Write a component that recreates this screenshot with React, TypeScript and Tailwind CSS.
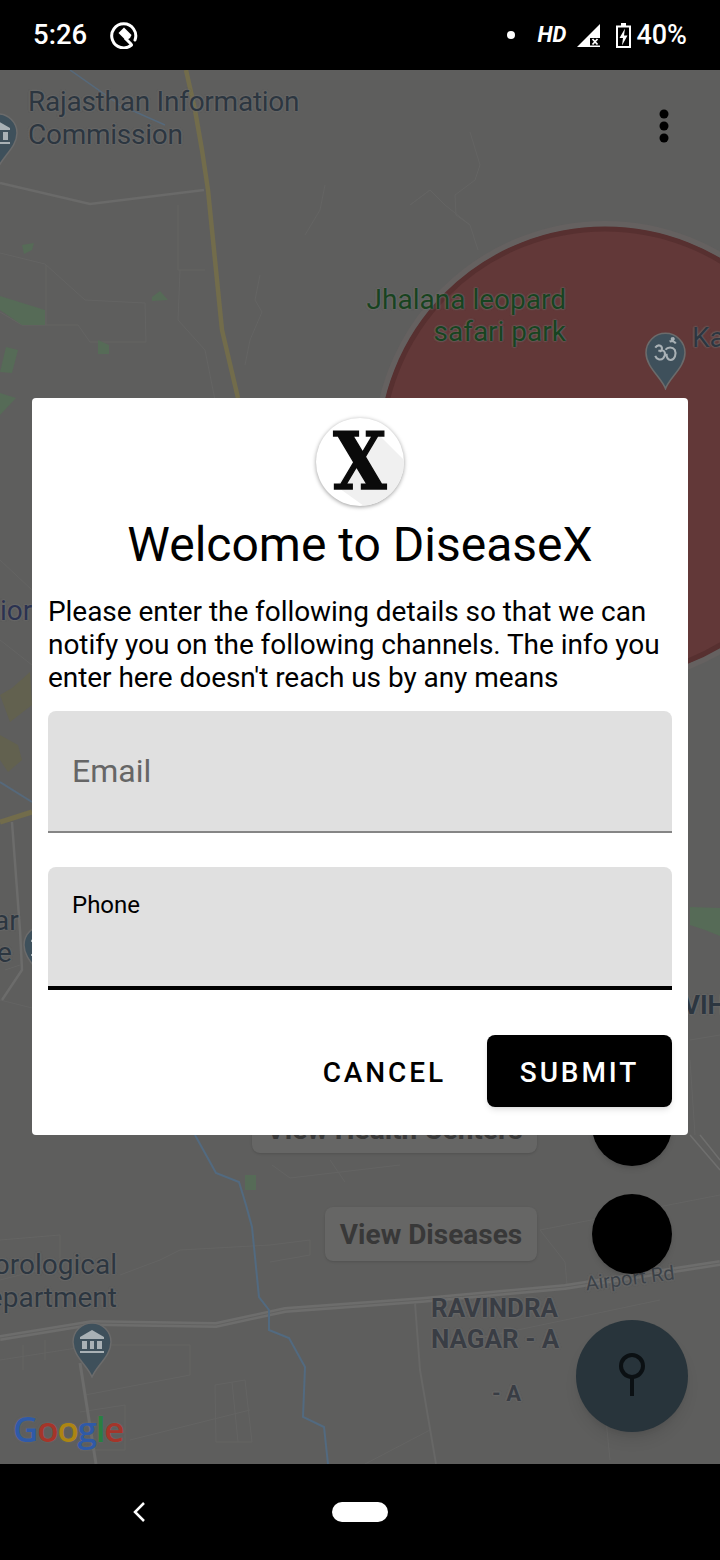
import React from "react";

const font = "font-['Roboto',sans-serif]";

// Map linework, in screen coordinates (the svg viewBox starts at y=70)
const thinRoads = [
  "M0 253 L45 264 L85 300 L145 303 L146 342 L90 342 L78 325 L22 325 L0 312",
  "M46 265 L46 325",
  "M470 132 L480 165 L475 180 L455 195 L456 215 L470 225",
  "M430 190 L410 205 L430 190 L445 205 L470 225 L478 250",
  "M325 185 L320 210 L305 235",
  "M260 275 L255 300 L262 312 L250 340 L245 365",
  "M178 205 L178 270 L205 270",
  "M180 270 L178 320 L205 350 L215 400",
  "M0 560 L32 590",
  "M0 640 L32 665",
  "M0 1000 L32 1008",
  "M5 970 L20 965",
  "M690 1060 L695 1135",
  "M690 1040 L720 1035",
  "M272 1165 L290 1178 L400 1165",
  "M330 1160 L345 1182",
  "M0 1240 L60 1235 L60 1265 L0 1280",
  "M120 1275 L160 1260 L180 1250 L270 1245 L310 1240 L310 1255 L270 1262",
  "M540 1230 L565 1262 L567 1285",
  "M540 1230 L720 1195",
  "M0 1360 L96 1345 L190 1345 L190 1375 L85 1395",
  "M23 1345 L23 1370 M45 1340 L45 1360",
  "M215 1385 L245 1380 L252 1442 L216 1442 Z",
  "M232 1382 L238 1442",
  "M80 1412 L125 1405 L125 1450 L80 1450",
  "M130 1440 L210 1420 L250 1410",
  "M365 1464 L430 1430",
  "M600 1360 L610 1460",
  "M470 1340 L660 1300",
];

const greens = [
  "M22 245 L34 243 L32 250 L24 254 Z",
  "M152 297 L160 291 L168 300 L152 301 Z",
  "M0 296 L45 310 L45 325 L22 325 L0 310 Z",
  "M98 340 L109 345 L109 354 L98 354 Z",
  "M6 347 L18 350 L12 373 L0 372 Z",
  "M0 393 L16 398 L0 415 Z",
  "M245 1175 L256 1175 L256 1190 L245 1190 Z",
  "M690 907 L720 908 L720 936 L705 930 L690 925 Z",
];

const yellowPatches = [
  "M0 695 L12 688 L30 672 L32 705 L10 722 Z",
  "M0 735 L18 745 L22 760 L8 772 L0 760 Z",
];

function Pin({ className, om }: { className: string; om?: boolean }) {
  return (
    <svg viewBox="0 0 40 56" className={className}>
      <path
        d="M20 55C16 44 1 34 1 20A19 19 0 1 1 39 20C39 34 24 44 20 55Z"
        fill="#3e505b"
        stroke="#6b6b6b"
        strokeWidth="1.5"
      />
      {om ? (
        <path
          d="M10 15C13 11 18 13 16 18C19 17 21 21 18 25C15 28 11 26 10 23M16 18H13M20 17C22 14 27 14 29 17C31 21 29 27 25 27C22 27 21 24 21 21M24 9C26 8 29 9 30 11M27 5.5A1 1 0 1 0 27.1 5.5"
          fill="none"
          stroke="#a9b1b5"
          strokeWidth="2"
        />
      ) : (
        <path
          d="M20 8L32 15V17H8V15ZM10 19H15V27H10ZM18 19H22V27H18ZM25 19H30V27H25ZM8 29H32V31H8Z"
          fill="#a9b1b5"
        />
      )}
    </svg>
  );
}

function ActionRow({ chip, className }: { chip: string; className: string }) {
  return (
    <div className="flex items-center justify-end gap-[55px] pr-[16px]">
      <div className={`flex h-[54px] items-center justify-center rounded-lg bg-[#666665] shadow-sm ${font} text-[28px] font-bold text-[#383838] ${className}`}>
        {chip}
      </div>
      <div className="h-[80px] w-[80px] rounded-full bg-black shadow-md" />
    </div>
  );
}

function MapCanvas() {
  const label = `absolute ${font} text-[#2c3640] whitespace-nowrap [text-shadow:0_0_2px_#707070,0_0_2px_#707070]`;
  return (
    <div className="relative flex-1 overflow-hidden bg-[#5e5e5d]">
      <svg viewBox="0 70 720 1394" className="absolute inset-0 w-[720px] h-[1394px]" fill="none">
        {thinRoads.map((d) => (
          <path key={d} d={d} stroke="#646463" strokeWidth="1" />
        ))}
        {greens.map((d) => (
          <path key={d} d={d} fill="#566b57" />
        ))}
        {yellowPatches.map((d) => (
          <path key={d} d={d} fill="#62614f" />
        ))}
        {/* grey roads */}
        <path d="M0 183L90 204L204 190" stroke="#6a6a69" strokeWidth="2.5" />
        <path d="M12 822L20 930L22 970L2 1000" stroke="#6c6c6b" strokeWidth="2.5" />
        <path d="M0 1338L92 1323L216 1325L285 1310L422 1300L565 1287L720 1263" stroke="#6d6d6c" strokeWidth="6" />
        <path d="M0 1338L92 1323L216 1325L285 1310L422 1300L565 1287L720 1263" stroke="#626261" strokeWidth="1" />
        <path d="M80 1363L96 1464" stroke="#6c6c6b" strokeWidth="3" />
        <path d="M415 1303L420 1370L436 1464" stroke="#676766" strokeWidth="2" />
        <path d="M700 1135L720 1160M690 1135L720 1170" stroke="#6f6f6e" strokeWidth="1.5" />
        {/* yellow roads */}
        <path d="M186 70L195 110L202 150L208 190L222 330L238 398" stroke="#726c4b" strokeWidth="4.5" />
        <path d="M0 822L32 812" stroke="#726c4b" strokeWidth="5" />
        {/* water */}
        <path d="M70 70L120 105L165 125" stroke="#56697b" strokeWidth="1.5" />
        <path d="M0 782L32 802" stroke="#56697b" strokeWidth="2" />
        <path
          d="M195 1135L216 1173L239 1182L246 1205L252 1227L259 1297L269 1310L269 1330L289 1338L305 1367L303 1417L324 1427L328 1464"
          stroke="#526a80"
          strokeWidth="2"
        />
        {/* disease zone */}
        <circle cx="605" cy="453" r="229" fill="#623838" stroke="#656160" strokeWidth="6" />
        <circle cx="605" cy="453" r="224" stroke="#573030" strokeWidth="5" />
      </svg>

      <div className={`${label} left-[28px] top-[15px] text-[28px] leading-[33px] tracking-[-0.25px]`}>
        Rajasthan Information
        <br />
        Commission
      </div>
      <Pin className="absolute left-[-22px] top-[43px] w-[40px] h-[56px]" />
      <div className={`${label} left-[366px] top-[214px] w-[200px] text-right text-[28px] leading-[32px] !text-[#184320]`}>
        Jhalana leopard
        <br />
        safari park
      </div>
      <Pin om className="absolute left-[645px] top-[262px] w-[41px] h-[58px]" />
      <div className={`${label} left-[692px] top-[251px] text-[28px] leading-[33px]`}>Ka</div>
      <div className={`${label} left-0 top-[524px] text-[28px] leading-[33px] !text-[#2b3250]`}>ior</div>
      <div className={`${label} left-[-6px] top-[834px] text-[28px] leading-[33px]`}>ar</div>
      <div className={`${label} left-[-3px] top-[866px] text-[28px] leading-[33px]`}>e</div>
      <Pin className="absolute left-[23px] top-[855px] w-[40px] h-[56px]" />
      <div className={`${label} left-[683px] top-[920px] text-[26px] leading-[31px] font-bold`}>VIH.</div>

      <div className={`${label} left-[-83px] top-[1178px] w-[200px] text-right text-[28px] leading-[33px]`}>
        orological
        <br />
        epartment
      </div>
      <Pin className="absolute left-[72px] top-[1252px] w-[40px] h-[56px]" />
      <div className={`${label} left-[431px] top-[1223px] text-[26px] leading-[31px] font-bold !text-[#393d44]`}>
        RAVINDRA
        <br />
        NAGAR - A
      </div>
      <div className={`${label} left-[492px] top-[1309px] text-[22px] leading-[30px] font-bold !text-[#393d44]`}>- A</div>
      <div className={`${label} left-[585px] top-[1195px] text-[20px] leading-[26px] -rotate-[7deg] !text-[#3c4248]`}>Airport Rd</div>

      <div className="absolute left-[13px] top-[1337px] font-['Open_Sans',sans-serif] font-semibold text-[35px] leading-[44px] tracking-[-1.2px] [text-shadow:0_0_2px_#6e6e6e]">
        <span className="text-[#2f5aa8]">G</span>
        <span className="text-[#a5352a]">o</span>
        <span className="text-[#ad8512]">o</span>
        <span className="text-[#2f5aa8]">g</span>
        <span className="text-[#2a8040]">l</span>
        <span className="text-[#a5352a]">e</span>
      </div>

      {/* floating actions on the right of the map */}
      <div className="absolute right-[32px] top-[1016px] flex flex-col gap-[28px]">
        <ActionRow chip="View Health Centers" className="w-[285px] pt-[8px]" />
        <ActionRow chip="View Diseases" className="w-[212px] pt-[2px]" />
        <div className="mt-[18px] flex h-[112px] w-[112px] items-center justify-center self-end rounded-full bg-[#28343b] shadow-lg">
          <svg viewBox="0 0 32 48" className="w-[32px] h-[48px]" fill="none" stroke="#0b1013" strokeWidth="4">
            <circle cx="16" cy="14" r="11" />
            <path d="M16 25V44" />
          </svg>
        </div>
      </div>

      <svg viewBox="0 0 24 40" className="absolute left-[652px] top-[38px] w-[24px] h-[40px]" fill="#000">
        <circle cx="12" cy="6" r="4.5" />
        <circle cx="12" cy="18" r="4.5" />
        <circle cx="12" cy="30" r="4.5" />
      </svg>
    </div>
  );
}

function StatusBar() {
  return (
    <div className={`flex items-center justify-between h-[70px] bg-black pl-[33px] pr-[33px] text-white ${font}`}>
      <div className="flex items-center gap-[23px]">
        <span className="text-[27.5px] leading-none font-medium">5:26</span>
        <svg viewBox="0 0 28 28" className="w-[28px] h-[28px]" fill="none">
          <path d="M21.5 24A12 12 0 1 1 25 19" stroke="#fff" strokeWidth="3" strokeLinecap="round" />
          <path d="M14 6.5L21.5 14L20 17L16 19.5L8.5 12Z" fill="#fff" />
          <path d="M15 17L21.5 23.5" stroke="#fff" strokeWidth="3" />
        </svg>
      </div>
      <div className="flex items-center">
        <span className="w-[8px] h-[8px] rounded-full bg-white mr-[22px]" />
        <span className="text-[22px] leading-none font-bold italic mr-[11px]">HD</span>
        <svg viewBox="0 0 24 24" className="w-[24px] h-[24px] mr-[15px]">
          <path d="M0 24L23 1V24Z" fill="#fff" />
          <path d="M13 15H24V22.5H13Z" fill="#000" />
          <path d="M15.5 16L20.5 21.5M20.5 16L15.5 21.5" stroke="#fff" strokeWidth="1.8" />
        </svg>
        <svg viewBox="0 0 15 25" className="w-[15px] h-[25px] mr-[5px]" fill="none">
          <path d="M5 0H10V2.5H15V25H0V2.5H5Z" fill="#fff" />
          <path d="M2 4.5H13V23H2Z" fill="#000" />
          <path d="M9 5.5L3.5 15H7L6 22.5L11.5 12.5H8Z" fill="#fff" />
        </svg>
        <span className="text-[27px] leading-none font-medium">40%</span>
      </div>
    </div>
  );
}

function Logo() {
  return (
    <div className="relative mx-auto w-[88px] h-[88px] overflow-hidden rounded-full bg-white shadow-[0_1px_4px_rgba(0,0,0,0.4)]">
      <svg viewBox="0 0 88 88" className="absolute inset-0 w-[88px] h-[88px]">
        <path d="M62 16L88 42V88H48L20 68Z" fill="#f0f0f0" />
      </svg>
      <span className="absolute inset-0 flex items-center justify-center font-['DejaVu_Serif',serif] font-bold text-[78px] leading-none text-[#0a0a0a] [-webkit-text-stroke:1.5px_#0a0a0a] scale-x-[0.88]">
        X
      </span>
    </div>
  );
}

function Dialog() {
  return (
    <div className={`absolute left-[32px] top-[398px] w-[656px] rounded-[4px] bg-white px-[16px] pt-[20px] pb-[28px] text-black ${font}`}>
      <Logo />
      <h1 className="mt-[11px] text-center text-[48px] leading-[56px] font-normal">Welcome to DiseaseX</h1>
      <p className="mt-[22px] text-[28px] leading-[33px] tracking-[-0.05px]">
        Please enter the following details so that we can notify you on the following channels. The info you enter here doesn't reach us by any means
      </p>
      <div className="mt-[17px] flex h-[122px] items-center rounded-t-[8px] border-b-2 border-[#858585] bg-[#e0e0e0] px-[24px] text-[32px] text-[#666666]">
        Email
      </div>
      <div className="mt-[34px] h-[123px] rounded-t-[8px] border-b-4 border-black bg-[#e0e0e0] px-[24px] pt-[24px] text-[24px] leading-[28px]">
        Phone
      </div>
      <div className="mt-[45px] flex items-center justify-end">
        <button className="mr-[41px] pt-[3px] text-[28px] font-medium tracking-[2.9px] leading-none">CANCEL</button>
        <button className="h-[72px] w-[185px] rounded-[8px] bg-black pt-[3px] text-[28px] font-medium tracking-[2.9px] text-white shadow-md">
          SUBMIT
        </button>
      </div>
    </div>
  );
}

export default function App() {
  return (
    <div className="relative flex flex-col w-[720px] h-[1560px] overflow-hidden bg-black">
      <StatusBar />
      <MapCanvas />
      <div className="flex items-center h-[96px] bg-black pl-[132px]">
        <svg viewBox="0 0 14 20" className="w-[14px] h-[20px]" fill="none" stroke="#fff" strokeWidth="2.5">
          <path d="M12 1L3 10L12 19" />
        </svg>
        <span className="ml-[186px] w-[56px] h-[20px] rounded-full bg-white" />
      </div>
      <Dialog />
    </div>
  );
}
